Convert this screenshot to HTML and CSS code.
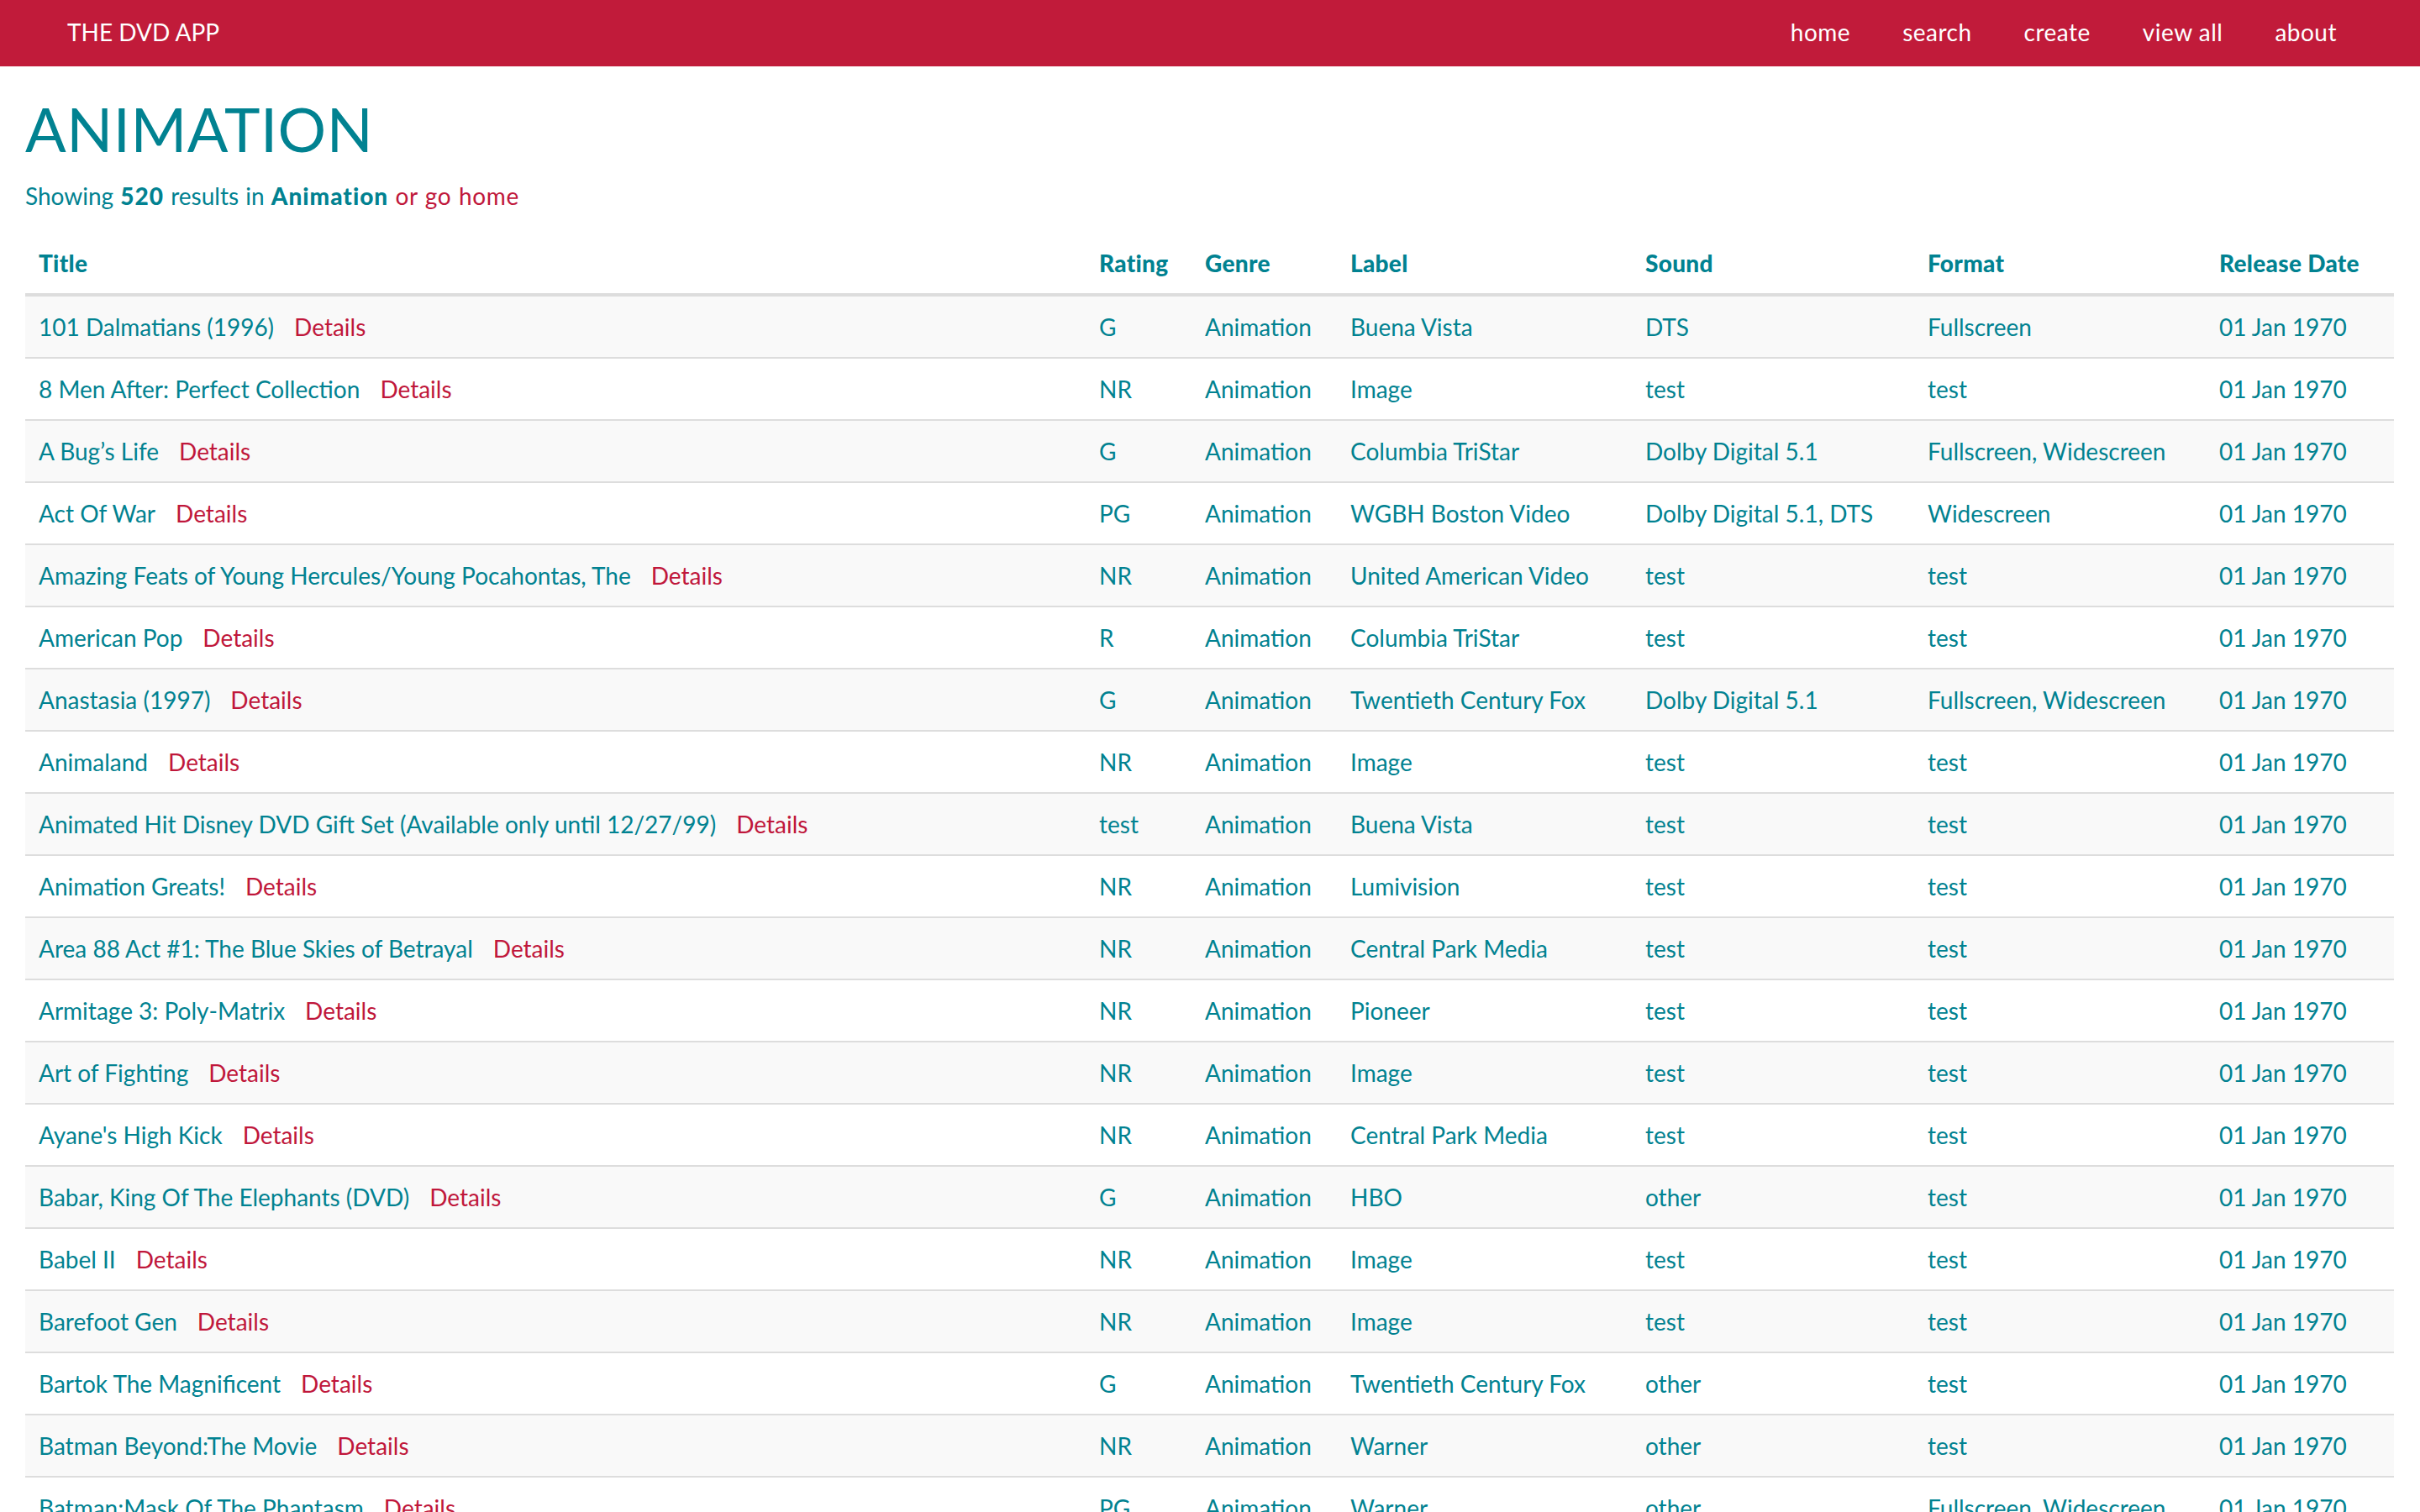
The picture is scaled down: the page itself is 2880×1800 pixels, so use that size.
FILE: index.html
```html
<!DOCTYPE html>
<html lang="en">
<head>
<meta charset="utf-8">
<title>The DVD App - Animation</title>
<link rel="stylesheet" href="styles.css">
</head>
<body>
<header class="navbar">
  <a class="brand" href="#">THE DVD APP</a>
  <nav class="nav">
    <a href="#">home</a>
    <a href="#">search</a>
    <a href="#">create</a>
    <a href="#">view all</a>
    <a href="#">about</a>
  </nav>
</header>
<main class="container">
  <h1 class="page-title">ANIMATION</h1>
  <p class="summary">Showing <strong>520</strong> results in <strong>Animation</strong> <a href="#" class="red">or go home</a></p>
  <table class="dvds">
    <colgroup>
      <col class="c-title"><col class="c-rating"><col class="c-genre"><col class="c-label"><col class="c-sound"><col class="c-format"><col class="c-date">
    </colgroup>
    <thead>
      <tr><th>Title</th><th>Rating</th><th>Genre</th><th>Label</th><th>Sound</th><th>Format</th><th>Release Date</th></tr>
    </thead>
    <tbody>
      <tr><td><a href="#">101 Dalmatians (1996)</a><a href="#" class="details">Details</a></td><td>G</td><td>Animation</td><td>Buena Vista</td><td>DTS</td><td>Fullscreen</td><td>01 Jan 1970</td></tr>
      <tr><td><a href="#">8 Men After: Perfect Collection</a><a href="#" class="details">Details</a></td><td>NR</td><td>Animation</td><td>Image</td><td>test</td><td>test</td><td>01 Jan 1970</td></tr>
      <tr><td><a href="#">A Bug’s Life</a><a href="#" class="details">Details</a></td><td>G</td><td>Animation</td><td>Columbia TriStar</td><td>Dolby Digital 5.1</td><td>Fullscreen, Widescreen</td><td>01 Jan 1970</td></tr>
      <tr><td><a href="#">Act Of War</a><a href="#" class="details">Details</a></td><td>PG</td><td>Animation</td><td>WGBH Boston Video</td><td>Dolby Digital 5.1, DTS</td><td>Widescreen</td><td>01 Jan 1970</td></tr>
      <tr><td><a href="#">Amazing Feats of Young Hercules/Young Pocahontas, The</a><a href="#" class="details">Details</a></td><td>NR</td><td>Animation</td><td>United American Video</td><td>test</td><td>test</td><td>01 Jan 1970</td></tr>
      <tr><td><a href="#">American Pop</a><a href="#" class="details">Details</a></td><td>R</td><td>Animation</td><td>Columbia TriStar</td><td>test</td><td>test</td><td>01 Jan 1970</td></tr>
      <tr><td><a href="#">Anastasia (1997)</a><a href="#" class="details">Details</a></td><td>G</td><td>Animation</td><td>Twentieth Century Fox</td><td>Dolby Digital 5.1</td><td>Fullscreen, Widescreen</td><td>01 Jan 1970</td></tr>
      <tr><td><a href="#">Animaland</a><a href="#" class="details">Details</a></td><td>NR</td><td>Animation</td><td>Image</td><td>test</td><td>test</td><td>01 Jan 1970</td></tr>
      <tr><td><a href="#">Animated Hit Disney DVD Gift Set (Available only until 12/27/99)</a><a href="#" class="details">Details</a></td><td>test</td><td>Animation</td><td>Buena Vista</td><td>test</td><td>test</td><td>01 Jan 1970</td></tr>
      <tr><td><a href="#">Animation Greats!</a><a href="#" class="details">Details</a></td><td>NR</td><td>Animation</td><td>Lumivision</td><td>test</td><td>test</td><td>01 Jan 1970</td></tr>
      <tr><td><a href="#">Area 88 Act #1: The Blue Skies of Betrayal</a><a href="#" class="details">Details</a></td><td>NR</td><td>Animation</td><td>Central Park Media</td><td>test</td><td>test</td><td>01 Jan 1970</td></tr>
      <tr><td><a href="#">Armitage 3: Poly-Matrix</a><a href="#" class="details">Details</a></td><td>NR</td><td>Animation</td><td>Pioneer</td><td>test</td><td>test</td><td>01 Jan 1970</td></tr>
      <tr><td><a href="#">Art of Fighting</a><a href="#" class="details">Details</a></td><td>NR</td><td>Animation</td><td>Image</td><td>test</td><td>test</td><td>01 Jan 1970</td></tr>
      <tr><td><a href="#">Ayane's High Kick</a><a href="#" class="details">Details</a></td><td>NR</td><td>Animation</td><td>Central Park Media</td><td>test</td><td>test</td><td>01 Jan 1970</td></tr>
      <tr><td><a href="#">Babar, King Of The Elephants (DVD)</a><a href="#" class="details">Details</a></td><td>G</td><td>Animation</td><td>HBO</td><td>other</td><td>test</td><td>01 Jan 1970</td></tr>
      <tr><td><a href="#">Babel II</a><a href="#" class="details">Details</a></td><td>NR</td><td>Animation</td><td>Image</td><td>test</td><td>test</td><td>01 Jan 1970</td></tr>
      <tr><td><a href="#">Barefoot Gen</a><a href="#" class="details">Details</a></td><td>NR</td><td>Animation</td><td>Image</td><td>test</td><td>test</td><td>01 Jan 1970</td></tr>
      <tr><td><a href="#">Bartok The Magnificent</a><a href="#" class="details">Details</a></td><td>G</td><td>Animation</td><td>Twentieth Century Fox</td><td>other</td><td>test</td><td>01 Jan 1970</td></tr>
      <tr><td><a href="#">Batman Beyond:The Movie</a><a href="#" class="details">Details</a></td><td>NR</td><td>Animation</td><td>Warner</td><td>other</td><td>test</td><td>01 Jan 1970</td></tr>
      <tr><td><a href="#">Batman:Mask Of The Phantasm</a><a href="#" class="details">Details</a></td><td>PG</td><td>Animation</td><td>Warner</td><td>other</td><td>Fullscreen, Widescreen</td><td>01 Jan 1970</td></tr>
    </tbody>
  </table>
</main>
</body>
</html>
```

FILE: styles.css
```css
* { box-sizing: border-box; }

html, body {
  margin: 0;
  padding: 0;
  background: #ffffff;
}

body {
  font-family: "Lato", "Liberation Sans", sans-serif;
  font-size: 28px;
  line-height: 40px;
  color: #018291;
}

a {
  color: #018291;
  text-decoration: none;
}

.navbar {
  height: 79px;
  background: #c11b3a;
  display: flex;
  align-items: center;
  justify-content: space-between;
  padding: 0 99px 4px 80px;
}

.brand {
  color: #ffffff;
  font-size: 28px;
}

.nav {
  display: flex;
  gap: 62px;
}

.nav a {
  color: #ffffff;
  font-size: 28px;
  letter-spacing: 0.5px;
}

.container {
  padding: 0 31px 0 30px;
}

.page-title {
  margin: 35px 0 20px 0;
  font-size: 72px;
  line-height: 79px;
  font-weight: 400;
  letter-spacing: 0.5px;
  color: #018291;
}

.summary {
  margin: 0 0 24px 0;
  color: #018291;
  word-spacing: 1px;
}

.summary strong {
  font-weight: 900;
  letter-spacing: 1px;
}

.red {
  color: #c0173b;
  letter-spacing: 0.6px;
}

.dvds {
  width: 100%;
  border-collapse: collapse;
  table-layout: fixed;
}

.c-title { width: 1262px; }
.c-rating { width: 126px; }
.c-genre { width: 173px; }
.c-label { width: 351px; }
.c-sound { width: 336px; }
.c-format { width: 347px; }
.c-date { width: 224px; }

.dvds th {
  text-align: left;
  font-weight: 900;
  padding: 16px;
  line-height: 40px;
  vertical-align: bottom;
  border-bottom: 4px solid #dddddd;
  white-space: nowrap;
  letter-spacing: 0.3px;
}

.dvds td {
  padding: 16px;
  line-height: 40px;
  border-top: 2px solid #dddddd;
  vertical-align: top;
  white-space: nowrap;
}

.dvds tbody tr:first-child td {
  border-top: 0;
}

.dvds tbody tr:nth-child(odd) {
  background: #f9f9f9;
}

.details {
  color: #c0173b;
  margin-left: 24px;
}
```
